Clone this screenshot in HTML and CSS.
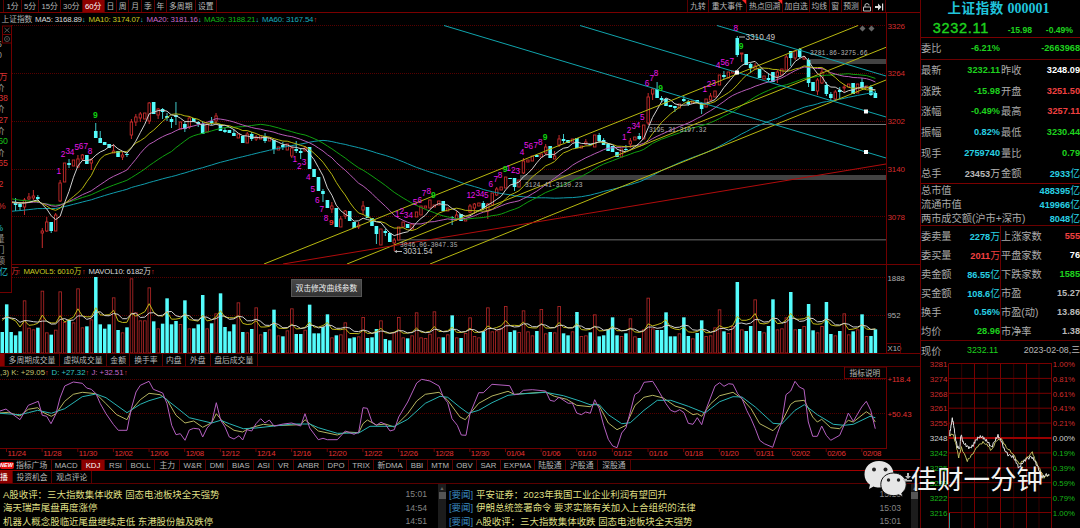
FILE: index.html
```html
<!DOCTYPE html>
<html lang="zh-CN">
<head>
<meta charset="utf-8">
<title>上证指数 000001</title>
<link rel="stylesheet" href="styles.css">
</head>
<body>
<div class="app">
<main class="main">
  <header class="topbar">
    <nav class="periods"><span></span><span>1分</span><span>5分</span><span>15分</span><span>30分</span><span class="on">60分</span><span>日</span><span>周</span><span>月</span><span>季</span><span>年</span><span>多周期</span><span>设置</span></nav>
    <nav class="tools"><span>九转</span><span class="hot">重大事件</span><span class="hot">热点回溯</span><span>加自选</span><span>均线</span><span>窗</span><span>预测</span>
      <span><svg width="10" height="10" viewBox="0 0 10 10" fill="none" stroke="#bbb"><path d="M1.5 5h7v4h-7zM3 5V2.5q2-2 4 0V3.5"/></svg></span>
      <span><svg width="10" height="10" viewBox="0 0 10 10"><path d="M1 4h3V1.5L7.5 5 4 8.500V6H1zM8 1.500h1.200v7H8z" fill="#ddd"/></svg></span></nav>
  </header>
  <svg class="pane" id="price" width="920" height="252" viewBox="0 13 920 252"></svg>
  <svg class="pane" id="volume" width="920" height="89" viewBox="0 265 920 89"></svg>
  <nav class="voltabs"><span class="fill"></span><span>多周期成交量</span><span>虚拟成交量</span><span>金额</span><span>换手率</span><span>内盘</span><span>外盘</span><span>盘后成交量</span></nav>
  <svg class="pane" id="kdj" width="920" height="92" viewBox="0 367 920 92"></svg>
  <nav class="indicators"><span class="first"><i>NEW</i>指标广场</span><span>MACD</span><span class="on">KDJ</span><span>RSI</span><span>BOLL</span><span>主力</span><span>W&amp;R</span><span>DMI</span><span>BIAS</span><span>ASI</span><span>VR</span><span>ARBR</span><span>DPO</span><span>TRIX</span><span>新DMA</span><span>BBI</span><span>MTM</span><span>OBV</span><span>SAR</span><span>EXPMA</span><span>陆股通</span><span>沪股通</span><span>深股通</span></nav>
  <nav class="newstabs"><span class="on">播</span><span>投资机会</span><span>观点评论</span></nav>
  <section class="news">
    <ul class="list left">
      <li><p>A股收评：三大指数集体收跌 固态电池板块全天强势</p><time>15:01</time></li>
      <li><p>海天瑞声尾盘再度涨停</p><time>14:54</time></li>
      <li><p>机器人概念股临近尾盘继续走低 东港股份触及跌停</p><time>14:51</time></li>
    </ul>
    <div class="scroll"><b>▲</b><i></i></div>
    <ul class="list right">
      <li><em>[要闻]</em><p>平安证券：2023年我国工业企业利润有望回升</p><time>15:10</time></li>
      <li><em>[要闻]</em><p>伊朗总统签署命令 要求实施有关加入上合组织的法律</p><time>15:03</time></li>
      <li><em>[要闻]</em><p>A股收评：三大指数集体收跌 固态电池板块全天强势</p><time>15:01</time></li>
    </ul>
    <div class="scroll"><b>▲</b><i></i></div>
  </section>
</main>

<aside class="side">
  <h1>上证指数 <span>000001</span></h1>
  <div class="quote g"><strong>3232.11</strong><span>-15.98</span><span>-0.49%</span></div>
  <div class="ratio"><label>委比</label><b class="g">-6.21%</b><b class="g">-2663968</b></div>
  <div class="grid six">
    <label>最新</label><b class="g">3232.11</b><label>昨收</label><b class="w">3248.09</b>
    <label>涨跌</label><b class="g">-15.98</b><label>开盘</label><b class="r">3251.50</b>
    <label>涨幅</label><b class="g">-0.49%</b><label>最高</label><b class="r">3257.11</b>
    <label>振幅</label><b class="c">0.82%</b><label>最低</label><b class="g">3230.44</b>
    <label>现手</label><b class="c">2759740</b><label>量比</label><b class="g">0.79</b>
    <label>总手</label><b>23453<u>万</u></b><label>金额</label><b class="c">2933<u>亿</u></b>
  </div>
  <div class="caps">
    <div><label>总市值</label><b class="c">488395<u>亿</u></b></div>
    <div><label>流通市值</label><b class="c">419966<u>亿</u></b></div>
    <div><label>两市成交额(沪市+深市)</label><b class="c">8048<u>亿</u></b></div>
  </div>
  <div class="grid split">
    <label>委卖量</label><b class="c">2278<u>万</u></b><label>上涨家数</label><b class="r">555</b>
    <label>委买量</label><b class="r">2011<u>万</u></b><label>平盘家数</label><b class="w">76</b>
    <label>卖金额</label><b class="c">86.55<u>亿</u></b><label>下跌家数</label><b class="g">1585</b>
    <label>买金额</label><b class="c">108.6<u>亿</u></b><label>市盈</label><b>15.27</b>
    <label>换手</label><b class="c">0.56%</b><label>市盈(动)</label><b>13.86</b>
    <label>均价</label><b class="g">28.96</b><label>市净率</label><b>1.38</b>
  </div>
  <div class="now"><label>现价</label><span class="g">3232.11</span><span>2023-02-08,三</span></div>
  <svg class="pane" id="intraday" width="159" height="169" viewBox="921 359 159 169"></svg>
</aside>

<svg class="clipped" id="strip" width="13" height="270" viewBox="0 25 13 270"></svg>
<div class="tip">双击修改曲线参数</div>
<div class="mark">
  <svg width="44" height="40" viewBox="863 458 44 40">
    <path d="M879 461c8.500 0 14.500 5.500 14.500 13.500s-6 13-14.500 13c-2 0-4-.3-5.500-1l-4.500 2.500 1-4.300c-3.500-2.500-5.500-6-5.500-10.200 0-8 6-13.500 14.500-13.500z" fill="#e6e6e6"/>
    <path d="M893.500 473c7.500 0 12.700 4.800 12.700 11.500 0 3.700-1.700 6.500-4.400 8.500l.9 3.800-4-2c-1.600.6-3.300.8-5.200.8-7.500 0-12.700-4.500-12.700-11.100S886 473 893.500 473z" fill="#e6e6e6" stroke="#111" stroke-width="1"/>
    <g fill="#222"><circle cx="874" cy="469.500" r="2"/><circle cx="885.500" cy="469.500" r="2"/><circle cx="888.500" cy="480" r="1.700"/><circle cx="898.500" cy="480" r="1.700"/></g>
    <path d="M903 479.500h4" stroke="#bbb" stroke-width="1.500"/>
  </svg><span>佳财一分钟</span>
</div>
<svg class="download" width="8" height="9" viewBox="0 0 8 9"><path d="M3 0h2v3h2L4 6 1 3h2zM0 7h8v1.500H0z" fill="#bbb"/></svg>
</div>
<script src="charts.js"></script>
</body>
</html>
```
FILE: styles.css
```css
* { box-sizing: border-box; margin: 0; padding: 0; }
body { background: #000; color: #b8b8b8; font: 7.8px/1 "Liberation Sans", "Noto Sans CJK SC", sans-serif; overflow: hidden; }
.app { position: relative; width: 1080px; height: 528px; display: grid; grid-template-columns: 920px 160px; overflow: hidden; }
.main { display: flex; flex-direction: column; height: 528px; }
.pane { display: block; flex: none; }
svg text { font-family: "Liberation Sans", "Noto Sans CJK SC", sans-serif; }

nav { display: grid; white-space: nowrap; flex: none; }
nav > span { display: flex; align-items: center; justify-content: center; border-right: 1px solid #5a0000; overflow: hidden; padding-top: 1px; }
nav .on, nav .fill { background: #8c0000; color: #fff; }
.topbar { height: 13px; display: flex; border-bottom: 1px solid #7a0000; flex: none; }
.periods { grid-template-columns: 4.300px 17.400px 17.600px 21.700px 21.700px 22px 12.300px 12.300px 12.700px 12.700px 12.300px 28.700px 21.300px; margin-right: auto; }
.tools { grid-template-columns: 20.300px 38.300px 36.500px 26.500px 19.700px 12px 20px 11.700px 12.700px; border-left: 1px solid #5a0000; margin-right: 34px; }
.hot { position: relative; }
.hot::after { content: ""; position: absolute; right: 0; top: 0; border-left: 4px solid transparent; border-top: 4px solid #f22; }
.voltabs { height: 13px; grid-template-columns: 5px 55px 47px 23.300px 32.300px 23.300px 24.700px 47.300px; border-bottom: 1px solid #5a0000; }
.indicators { height: 12px; border-top: 1px solid #5a0000; border-bottom: 1px solid #a00000; grid-template-columns: 51.700px 30px 23.700px 21.300px 28.700px 24.700px 26.300px 22px 26px 19.700px 19.700px 30.300px 25px 25.300px 32.700px 21px 25.300px 23.300px 24.700px 33.300px 31.700px 32px 32.300px; }
.indicators .first { justify-content: flex-start; gap: 2px; }
.indicators i { background: #e01010; color: #fff; font: italic bold 5.500px/7px "Liberation Sans", sans-serif; border-radius: 2px; width: 14px; height: 7px; overflow: hidden; }
.newstabs { height: 13px; grid-template-columns: 12.700px 39.600px 40px; border-bottom: 1px solid #5a0000; }
.newstabs .on { justify-content: flex-start; }

.news { flex: 1; display: grid; grid-template-columns: 438px 8px 465px 7px; min-height: 0; }
.list { list-style: none; padding-top: 4px; white-space: nowrap; }
.list li { display: flex; height: 13.400px; align-items: center; font-size: 9.450px; }
.list p { color: #dede82; }
.list em { color: #3a8cc0; font-style: normal; width: 27px; }
.list time { margin-left: auto; color: #858585; font-size: 8.600px; }
.left { padding-left: 3px; padding-right: 11px; }
.right { padding-left: 3px; padding-right: 10px; }
.scroll { background: #1c1c1c; display: flex; flex-direction: column; align-items: center; }
.scroll b { font-size: 5px; line-height: 8px; color: #666; }
.scroll i { width: 7px; height: 7px; background: #555; }

.side { border-left: 1px solid #6a0000; height: 528px; display: flex; flex-direction: column; overflow: hidden; font-size: 9.200px; }
.side label { font-size: 10.200px; color: #aaa; white-space: nowrap; padding-top: 2px; }
.side b { text-align: right; padding-top: 1px; }
.side u { font-weight: normal; font-size: 9.800px; text-decoration: none; }
.side h1 { height: 17px; color: #20c4dc; font: bold 13.500px/15px "Noto Sans CJK SC", sans-serif; text-align: center; white-space: nowrap; letter-spacing: .6px; padding-right: 4px; }
.side h1 span { font-family: "Liberation Serif", serif; font-size: 14px; letter-spacing: 0; }
.quote { height: 21px; display: grid; grid-template-columns: 73px 38px 41px; align-items: center; text-align: right; border-bottom: 1px solid #7a0000; }
.quote strong { font: 14.500px/20px "Liberation Sans", sans-serif; padding: 1px 5px 0 0; letter-spacing: .7px; -webkit-text-stroke: .4px #1ed21e; }
.quote span { font-weight: bold; font-size: 8.600px; padding-top: 6px; }
.ratio { height: 22px; display: grid; grid-template-columns: 24px 55px 80px; align-items: center; border-bottom: 1px solid #6a0000; }
.grid { display: grid; align-items: center; }
.six { height: 123.500px; grid-template-columns: 24px 55px 24px 56px; grid-auto-rows: 20.600px; border-bottom: 1px solid #7a0000; }
.grid label:nth-child(4n+3) { padding-left: 1px; }
.caps { height: 42px; border-bottom: 1px solid #6a0000; }
.caps div { display: flex; justify-content: space-between; align-items: center; height: 13.900px; }
.split { height: 115px; padding-top: 1.500px; grid-template-columns: 32px 47px 44px 36px; grid-auto-rows: 19px; border-bottom: 1px solid #6a0000; background: linear-gradient(#6a0000, #6a0000) 79px 0 / 1px 100% no-repeat; }
.now { display: flex; height: 18.500px; padding-top: 2px; align-items: center; justify-content: space-between; font-size: 8.800px; }
.g { color: #1ed21e; }
.w { color: #fff; }
.r { color: #f04040; }
.c { color: #28d0e4; }

.clipped { position: absolute; left: 0; top: 25px; }
.tip { position: absolute; left: 291px; top: 279px; width: 71px; height: 18px; background: linear-gradient(#484848, #333); border: 1px solid #555; color: #eee; font-size: 7.700px; line-height: 17px; text-align: center; white-space: nowrap; }
.mark { position: absolute; left: 863px; top: 457px; display: flex; align-items: center; gap: 3.500px; color: #f2f2f2; font: 26.500px/42px "Noto Sans CJK SC", sans-serif; white-space: nowrap; }
.download { position: absolute; left: 904px; top: 473px; }
```
FILE: charts.js
```javascript
const X = i => 2.2 + i * 4.455;
const el = id => document.getElementById(id);
const line = (x1, y1, x2, y2, c, extra = '') => `<line x1="${x1}" y1="${y1}" x2="${x2}" y2="${y2}" stroke="${c}" ${extra}/>`;
const rect = (x, y, w, h, c, extra = '') => `<rect x="${x}" y="${y}" width="${w}" height="${h}" fill="${c}" ${extra}/>`;
const text = (x, y, s, c, size = 7.8, extra = '') => `<text x="${x}" y="${y}" fill="${c}" font-size="${size}" ${extra}>${s}</text>`;
const path = (pts, c, w = 1) => `<polyline points="${pts.map(p => p[0].toFixed(1) + ',' + p[1].toFixed(1)).join(' ')}" fill="none" stroke="${c}" stroke-width="${w}"/>`;
const DOT = 'stroke-dasharray="1 1"', CRISP = 'shape-rendering="crispEdges"';
const AXIS = '#700000', GRID = '#560000', CY = '#54fcfc', RD = '#c82c2c';
const pairs = (s, f) => s.trim().split(/\s+/).map(p => f(...p.split(',').map(Number)));

/* Volume bars: direction and bar top, in thirds of a pixel */
const vols = `c210 c127 c210 c220 c208 r115 r197 r202 c197 r86 r211 c218 r203 r88 r180 c174 r181 r79 r196 c193
r172 c45 c187 c200 c187 r106 c204 r211 c196 r49 r151 r175 r175 r76 c178 r199 c185 c109 c187 c177
r186 c115 r199 c199 c187 c99 r199 c184 r154 c94 c195 c208 c187 r121 c210 r211 c201 r136 r217 c210
r202 c143 r220 c223 r205 r139 c216 c216 r203 c128 c214 c214 c195 c157 r226 c220 r217 r181 c229 c226
r223 r165 c228 c226 c201 r175 c231 c235 r211 r165 r226 c229 r220 r151 r226 r228 r215 r148 r226 c226
r217 c160 r226 c228 r213 r166 r222 r226 c208 r136 r208 r205 r198 r132 c210 c205 r210 r145 r208 r220
c207 r141 r214 c210 r211 r132 c214 c220 r208 c150 r222 r220 c211 r157 c223 c220 c202 c166 c220 r222
c214 r169 r223 c228 r202 r107 r199 c204 c204 c151 c223 c223 r214 c166 c222 r229 c213 c175 r222 r220
r196 r142 c208 r213 r192 c60 r202 c207 c192 r112 c207 r211 c192 c112 r202 r199 r166 c90 r202 c201
r192 c126 c205 r211 r192 c120 c216 r220 c207 r154 r217 c208 r202 c157 r222 c222 c202`.trim().split(/\s+/)
  .map(s => ({ up: s[0] === 'r', y: 262 + s.slice(1) / 3 }));

/* Candles: body top, body bottom, wick top, wick bottom */
const candles = `198,200 198,200 199,203 202,205,198,211 204,207,202,210 200,207,198,215 197,199,193,200 196,198,190,200 197,199,195,203 231,233,228,248
222,231,217,232 222,231,222,233 215,231,213,231 183,201,180,202 163,182 163,165,159,168 160,166 159,167,155,168 155,159,154,161 155,164
160,163,158,170 131,138,123,138 138,143,131,143 142,145 144,148 151,153,144,153 151,157 155,157,152,160 154,155,152,157 122,135,119,139
117,122,114,126 114,118,112,122 113,119 103,121,102,124 102,114 109,115,108,119 109,112,108,119 116,118,113,121 119,122,117,128 115,117,102,125
122,129 124,129,122,132 118,127,116,129 118,122 122,124,121,127 124,134,121,134 124,132 121,123,117,125 116,121,113,124 124,131
130,132,128,133 130,133 133,136,129,136 134,138 136,143 134,143,132,143 134,139,132,141 137,139,135,141 136,139 136,141,133,143
138,141 140,149,140,154 147,150 145,147,142,150 144,150 148,156,146,158 149,151,141,153 151,153,148,159 148,151,146,151 147,169
169,177 177,191 191,194,189,202 200,208 206,209,202,213 208,227 219,227,216,227 211,216,210,219 211,221 222,228
225,227,222,229 206,210,201,215 207,218 218,226 226,234,226,244 229,245 231,233,229,236 233,242 240,243,238,251 227,240
222,227 224,228 224,229 212,217 206,215 206,208 200,208 205,207 201,205 201,211
208,211 217,218,216,225 215,219,211,221 214,221 219,221 206,212,204,213 204,208,203,214 203,206 203,208,201,210 204,211,203,219
193,205 189,195,187,196 187,190 177,188 178,179 178,187,178,191 180,187 161,173,158,174 160,162 156,161
155,157 154,157 147,153,144,155 146,158 156,159,151,159 139,145,135,147 139,141,134,143 140,143 139,142 138,148
146,148 142,144,139,145 144,145 135,147 135,141,133,143 140,145,138,145 144,151 146,152 152,157 149,157
149,150,145,152 141,144,138,148 137,140 136,139,133,140 125,139 97,123,93,125 89,94,88,100 89,98,82,98 98,100,96,102 99,106
105,107 106,108,106,112 104,108 99,101,96,102 102,104,100,106 101,103 100,103 104,109,102,114 99,107 96,100,93,101
91,97 75,85 75,77,71,79 72,78 71,73 38,55,36,57 53,54,53,62 54,65 64,68,63,73 66,69,63,69
69,78 76,79 78,80,73,82 72,82 72,76,70,83 69,75 57,70,55,70 51,58,51,66 51,58,51,60 49,57,48,58
57,59,56,60 60,83,58,87 82,91 80,91,78,95 72,83,69,84 85,94,82,96 94,98,92,101 92,99,90,101 90,92,87,99 87,88,84,92
84,87 83,94 84,93 82,87,78,89 86,88 87,95,85,96 93,98,91,98`.trim().split(/\s+/).map(s => s.split(',').map(Number));

const closes = candles.map((c, i) => vols[i].up ? c[0] : c[1]);
const history = [...Array(30).fill(228), ...Array(10).fill(186), ...Array(20).fill(203)];
function average(values, n, before) {
  const all = [...before, ...values], off = before.length;
  return values.map((_, i) => [X(i), all.slice(off + i - n + 1, off + i + 1).reduce((a, b) => a + b) / n]);
}

/* Price pane */
let s = '';
for (const y of [25.5, 73.5, 121.5, 169.5, 216.5]) s += line(12, y, 886, y, GRID, DOT + ' ' + CRISP);
s += rect(807, 59, 79, 5, '#424242') + rect(520, 175, 366, 5, '#424242') + rect(648, 124, 238, 1, '#777') + rect(397, 239, 489, 1.5, '#484848');
candles.forEach((c, i) => {
  if (i < 3) return;
  const x = X(i), up = vols[i].up, t = c[2] ?? c[0], b = c[3] ?? c[1];
  if (up) {
    s += line(x, t, x, c[0], RD) + line(x, c[1], x, b, RD)
      + `<rect x="${x - 1.2}" y="${c[0]}" width="2.400" height="${Math.max(1, c[1] - c[0])}" fill="#000" stroke="${RD}" stroke-width=".9"/>`;
  } else s += line(x, t, x, b, '#40c8c8') + rect(x - 1.8, c[0], 3.6, c[1] - c[0], CY);
});
[[5, '#d0d0d0'], [10, '#b4b410'], [20, '#b85cb8'], [30, '#10a010'], [60, '#109cac']].reverse().forEach(([n, c]) => {
  s += path(average(closes, n, history).slice(2), c);
});
for (const l of [[264, 264, 858, 25.5], [347, 264, 886, 47.3], [430, 264, 886, 80]]) s += line(...l, '#b8b810');
s += line(283, 264, 886, 164, '#b00c0c');
for (const l of [[444, 25.5, 886, 158], [580, 25.5, 886, 117], [717, 25.5, 886, 76]]) s += line(...l, '#10a4ac');
for (const [x, y] of [[737, 72.5], [866, 111.5], [866, 152]]) s += rect(x - 2, y - 2, 4, 4, '#fff');
const seq = `1,58.7,173.7 2,63,157 3,67.7,153.5 4,72,155 5,76.7,149.5 6,81,148.5 7,85.7,149 8,90,153.5
1,294.7,162 2,299.3,169 3,304,165 4,308.3,180 5,312.7,192 6,317.3,202.5 7,321.7,212 8,326,220.5
1,397.3,217 2,401.7,214 3,406,218 4,410.7,218 5,415,205 6,419.7,203 7,424,196 8,428.7,194
1,468.7,197.5 2,473,197.5 3,477.7,196 4,482,196.5 5,486.3,198 6,490.7,187 7,495.7,181.5 8,500,177.5 1,508.5,171 2,513.3,173 3,517.7,174
4,522,155 5,526.3,147.5 6,530.7,148.5 7,535.7,148 8,540.3,144.5
1,624.3,140 2,629,132.5 3,633.7,128.5 4,638,128 5,642.3,119.5 6,647,86 7,651.7,81 8,656,76
1,704.7,91.7 2,709,87 3,713.7,86 4,718,68 5,722.7,65 6,727,66 7,731.7,63.5 8,735.7,31`;
pairs(seq, (n, x, y) => { s += text(x, y + .3, n, '#e818e8', 8.2, 'text-anchor="middle"'); });
for (const [x, y] of [[95.3, 118], [433.3, 198], [505, 172], [545, 140], [660.7, 91], [741, 49]]) s += text(x, y, 9, '#10d010', 8.5, 'text-anchor="middle" font-weight="bold"');
s += text(331.3, 225, 9, '#f03030', 8, 'text-anchor="middle" font-weight="bold"');
const mono = (x, y, t) => text(x, y, t, '#b4b4b4', 7.6, 'style="font-family:\'Liberation Mono\',monospace" textLength="57.500" lengthAdjust="spacingAndGlyphs"');
s += mono(810, 55.3, '3281.86-3275.66') + mono(649, 131.5, '3195.31-3197.32') + mono(525, 186.5, '3124.41-3130.23') + mono(400, 246.5, '3046.06-3047.35');
s += text(745.5, 39.5, '3310.49', '#c4c4c4', 8.2) + line(739, 37, 745, 37, '#bbb') + text(403, 254.300, '3031.54', '#c4c4c4', 8.2) + line(395, 251.500, 402, 251.500, '#bbb') + '<path d="M394 251.500l3-1.500v3z" fill="#bbb"/>';
s += '<path d="M862.500 25.500l3 3-3 3-3-3zM871.500 25.500l3 3-3 3-3-3z" fill="#666"/>';
s += text(1.5, 21.8, '上证指数', '#b4b4b4', 7.7);
[[35, 'MA5: 3168.89', '#d8d8d8', 47], [88.5, 'MA10: 3174.07', '#c8c820', 51.5], [146.500, 'MA20: 3181.16', '#c868c8', 51.500], [204, 'MA30: 3188.21', '#14b414', 51.500], [262, 'MA60: 3167.54', '#18aabc', 51.500]].forEach(([x, t, c, w], i) => {
  s += text(x, 21.8, t, c, 7.9, `textLength="${w}"`) + text(x + w, 22, i === 4 ? '↑' : '↓', i === 4 ? '#e03030' : '#28c8d8', 7);
});
[3326, 3264, 3202, 3140, 3078].forEach((v, i) => { s += text(887.5, 28.500 + i * 47.800, v, '#d42c2c', 8, 'textLength="17.500"'); });
s += line(886.5, 13, 886.5, 265, AXIS, CRISP) + line(11, 264.5, 920, 264.5, AXIS, CRISP);
el('price').innerHTML = s;

/* Volume pane */
s = line(0, 277.5, 886, 277.5, GRID, DOT + ' ' + CRISP) + line(0, 315.500, 886, 315.500, GRID, DOT + ' ' + CRISP);
vols.forEach((v, i) => {
  const x = X(i), h = 353 - v.y;
  s += v.up ? `<rect x="${x - 1.2}" y="${v.y + .5}" width="2.600" height="${h - .5}" fill="none" stroke="#b02626" stroke-width=".85"/>` : rect(x - 1.7, v.y, 3.5, h, CY);
});
const tops = vols.map(v => v.y), before = [325, 318, 325, 328, 296, 318, 324, 321, 324, 301];
s += path(average(tops, 5, before), '#c0b818') + path(average(tops, 10, before), '#d0d0d0');
s += text(2, 273.5, '万', '#d03030', 7.7) + text(11, 273.500, '万', '#d03030', 7.7) + text(17, 273.500, '↑', '#e03030', 7)
  + text(23.5, 273.5, 'MAVOL5: 6010万', '#c8c820', 7.8, 'textLength="58"') + text(82, 273.500, '↑', '#e03030', 7)
  + text(88.500, 273.500, 'MAVOL10: 6182万', '#d8d8d8', 7.8, 'textLength="62.500"') + text(151, 273.500, '↑', '#e03030', 7);
s += text(887.500, 280.5, '1888', '#b0b0b0', 7.8) + text(887.500, 318, '952', '#b0b0b0', 7.8) + text(887.500, 351, 'X10', '#b0b0b0', 7.8);
s += `<rect x="886.500" y="343.500" width="14" height="9.500" fill="none" stroke="${AXIS}" stroke-width=".8"/>`;
s += line(886.5, 265, 886.5, 354, AXIS, CRISP) + line(0, 353.500, 920, 353.500, AXIS, CRISP);
el('volume').innerHTML = s;

/* KDJ pane */
const J = `0,147 18,141 33,153 60,173 85,130 115,118 127,160 140,163 153,185 168,155 180,108 194,72 220,60 247,64 260,78 274,82 288,95 301,125 318,155 340,187 355,205 381,205 394,140 408,90 421,70 447,58 460,82 488,93 501,125 515,190 528,218 541,215 555,235 568,204 581,199 598,201 608,225 621,198 635,182 649,122 662,175 675,195 688,225 702,231 717,221 728,234 741,203 755,207 768,185 782,170 795,183 808,174 822,192 850,186 875,183 902,192 915,155 929,198 955,233 969,229 982,233 1012,233 1036,207 1062,217 1076,210 1089,137 1102,139 1116,180 1129,190 1143,181 1156,187 1170,207 1183,203 1196,165 1223,120 1250,63 1265,52 1290,57 1317,72 1330,105 1343,122 1356,170 1372,190 1384,219 1398,220 1410,155 1436,92 1450,92 1476,67 1529,71 1543,98 1556,97 1570,85 1597,83 1637,87 1650,115 1663,118 1677,106 1705,124 1717,123 1730,153 1744,158 1757,150 1771,154 1784,113 1798,140 1811,190 1825,232 1838,252 1851,257 1865,213 1878,197 1891,150 1904,98 1918,89 1932,61 1958,58 1972,80 1998,125 2012,145 2025,150 2039,143 2052,152 2065,184 2079,187 2092,167 2105,188 2119,140 2145,72 2159,62 2172,73 2186,65 2199,67 2213,95 2226,110 2240,145 2253,170 2266,200 2279,235 2293,245 2318,256 2332,215 2345,180 2358,98 2372,87 2385,58 2398,75 2412,82 2425,180 2438,223 2452,223 2465,192 2479,220 2492,235 2519,220 2532,190 2545,153 2560,178 2585,135 2599,118 2612,145 2626,200`;
const K = `0,153 25,151 60,162 85,142 113,137 127,150 154,163 168,155 194,118 220,97 247,91 288,95 318,125 350,158 381,173 394,145 421,113 447,94 480,98 500,112 528,160 555,183 581,177 608,196 635,182 649,155 675,187 702,205 728,210 741,202 768,193 790,187 822,191 902,188 915,173 955,207 1012,219 1040,210 1076,212 1089,185 1102,174 1129,189 1156,186 1183,195 1223,155 1250,117 1276,97 1317,91 1343,115 1380,165 1396,173 1410,155 1436,124 1476,102 1524,88 1543,97 1637,90 1663,103 1700,112 1730,130 1770,134 1784,125 1798,132 1825,183 1851,203 1878,190 1905,130 1932,106 1958,100 1990,108 2025,132 2052,140 2079,158 2092,155 2105,163 2132,125 2159,101 2199,91 2226,110 2253,140 2279,185 2319,206 2345,180 2372,127 2385,118 2413,115 2438,165 2452,180 2465,172 2492,197 2519,200 2545,175 2560,180 2599,149 2612,158 2626,180`;
const D = `0,154 60,158 85,152 113,145 154,154 194,140 247,104 288,96 318,107 381,152 421,127 447,116 488,104 528,135 568,167 635,183 662,175 688,185 730,200 768,198 822,192 880,186 929,186 955,197 1012,214 1076,213 1110,193 1183,193 1223,172 1276,124 1320,103 1343,106 1380,136 1405,154 1436,145 1476,122 1524,100 1560,96 1637,91 1690,101 1740,117 1770,128 1798,128 1825,158 1865,185 1891,182 1932,145 1972,115 2012,115 2065,133 2115,153 2159,119 2199,104 2226,105 2266,135 2319,184 2345,186 2385,145 2413,128 2452,158 2500,187 2532,190 2560,187 2610,163 2626,167`;
const third = (x, y) => [x / 3, 362 + y / 3];
s = line(0, 379.500, 886, 379.500, GRID, DOT + ' ' + CRISP) + line(0, 413.500, 886, 413.500, GRID, DOT + ' ' + CRISP);
s += path(pairs(K, third), '#b4b460') + path(pairs(D, third), '#28b4b4') + path(pairs(J, third), '#b460c0');
s += text(0, 375.300, ',3) K: +29.05', '#c4c470', 7.8, 'textLength="45"') + text(45, 375.300, '↑', '#e03030', 7)
  + text(51.500, 375.300, 'D: +27.32', '#30c4c4', 7.8, 'textLength="34"') + text(85.500, 375.300, '↑', '#e03030', 7)
  + text(91.500, 375.300, 'J: +32.51', '#c468cc', 7.8, 'textLength="32"') + text(124, 375.300, '↑', '#e03030', 7);
s += `<rect x="844.500" y="367" width="42" height="11.500" fill="#000" stroke="${AXIS}"/>` + text(849.500, 376, '指标说明', '#b8b8b8', 7.7);
s += text(887.5, 382, '+118.4', '#e03030', 7.8, 'textLength="23"') + text(887.5, 416.500, '+50.43', '#e03030', 7.8, 'textLength="24"');
s += line(886.500, 367, 886.500, 449, AXIS, CRISP) + line(0, 448.500, 887, 448.500, AXIS, CRISP);
'11/24 11/28 11/30 12/02 12/06 12/08 12/12 12/14 12/16 12/20 12/22 12/26 12/28 12/30 01/04 01/06 01/10 01/12 01/16 01/18 01/20 01/31 02/02 02/06 02/08'.split(' ')
  .forEach((d, i) => { const x = 7.5 + i * 35.640; s += line(x - 1, 448, x - 1, 452, AXIS) + text(x, 456, d, '#e03030', 7.8, 'textLength="18.500"'); });
el('kdj').innerHTML = s;

/* Intraday pane */
s = '';
[131, 209, 287, 363].forEach(x => { s += line(918 + x / 3, 363.500, 918 + x / 3, 528, '#600', DOT); });
[92, 169, 247, 325, 401].forEach(x => { s += line(Math.floor(918 + x / 3) + .5, 363.500, Math.floor(918 + x / 3) + .5, 528, '#780000', CRISP); });
const prices = [3281, 3274, 3268, 3261, 3255, 3248, 3242, 3235, 3229, 3222, 3216];
const percents = ['1.00%', '0.81%', '0.61%', '0.41%', '0.21%', '0.00%', '0.19%', '0.39%', '0.59%', '0.79%', '1.00%'];
prices.forEach((p, i) => {
  const y = 363.5 + i * 14.9, c = i < 5 ? '#cc2c2c' : i === 5 ? '#d0d0d0' : '#18b418';
  s += line(948.5, y, 1052, y, i === 5 ? '#900' : '#780000', i === 5 ? 'stroke-width="2"' : '');
  s += text(947.500, y + 3.2, p, c, 8, 'text-anchor="end"') + text(1052.8, y + 3.2, percents[i], c, 7.8);
});
const jag = (src, amp) => {
  const pts = pairs(src, (x, y) => [918 + x / 3, 264 + y / 3]), out = [];
  pts.slice(1).forEach((b, i) => {
    const a = pts[i];
    for (let k = 0; k < 4; k++) out.push([a[0] + (b[0] - a[0]) * k / 4, a[1] + (b[1] - a[1]) * k / 4 + Math.sin((i * 4 + k) * 2.3) * amp]);
  });
  return out;
};
s += path(jag('94,515 105,510 115,545 122,580 130,550 148,590 160,575 180,545 195,535 210,545 220,560 235,530 250,525 265,550 285,570 303,600 320,588 343,565 352,590 365,615 378,640 398,630', 1), '#c0c060');
s += path(jag('94,515 98,492 103,463 108,490 112,520 118,548 125,555 129,510 135,535 145,545 155,552 165,545 172,530 182,520 192,518 200,525 210,535 220,550 232,528 240,515 250,530 258,555 270,572 285,578 295,595 303,612 312,598 325,585 340,578 350,590 360,610 372,640 385,632 398,635', 1.5), '#e4e4e4');
s += line(949.5, 513, 949.5, 528, '#289090');
el('intraday').innerHTML = s;

/* Left strip: right-hand edge of the quote window */
s = rect(0, 51, 11, 242, '#000') + line(11.500, 25, 11.500, 293, AXIS) + line(0, 292.500, 12, 292.500, AXIS);
s += `<rect x="2.500" y="26" width="9" height="17" fill="#000" stroke="${AXIS}"/>` + line(3, 34.500, 11, 34.500, AXIS);
s += '<path d="M4.500 28l5 4.500m0-4.500l-5 4.500" stroke="#555" fill="none"/><circle cx="7" cy="39" r="2.500" fill="none" stroke="#555"/><circle cx="7" cy="39" r=".8" fill="#555"/>';
[['6', 47, '#999', 2], ['0', 57.500, '#999', 2], ['万', 79.500, '#d83030', 7.5], ['价', 90.500, '#999', 4.500], ['38', 101, '#d83030', 8], ['价', 112, '#999', 4.500], ['27', 122.500, '#d83030', 8], ['价', 134, '#999', 4.500], ['60', 144, '#18c018', 8], ['价', 155.500, '#999', 4.500], ['65', 166, '#d83030', 8], ['2', 187, '#d83030', 3.500], ['%', 209, '#d83030', 5.500], ['%', 230.500, '#20c0d0', 3], ['量', 242, '#999', 4.500], ['门', 252.500, '#999', 4.500], ['额', 263.500, '#999', 5], ['亿', 274.500, '#20c0d0', 8]]
  .forEach(([t, y, c, x]) => { s += text(x, y, t, c, 8.8, 'text-anchor="end"'); });
el('strip').innerHTML = s;
```
